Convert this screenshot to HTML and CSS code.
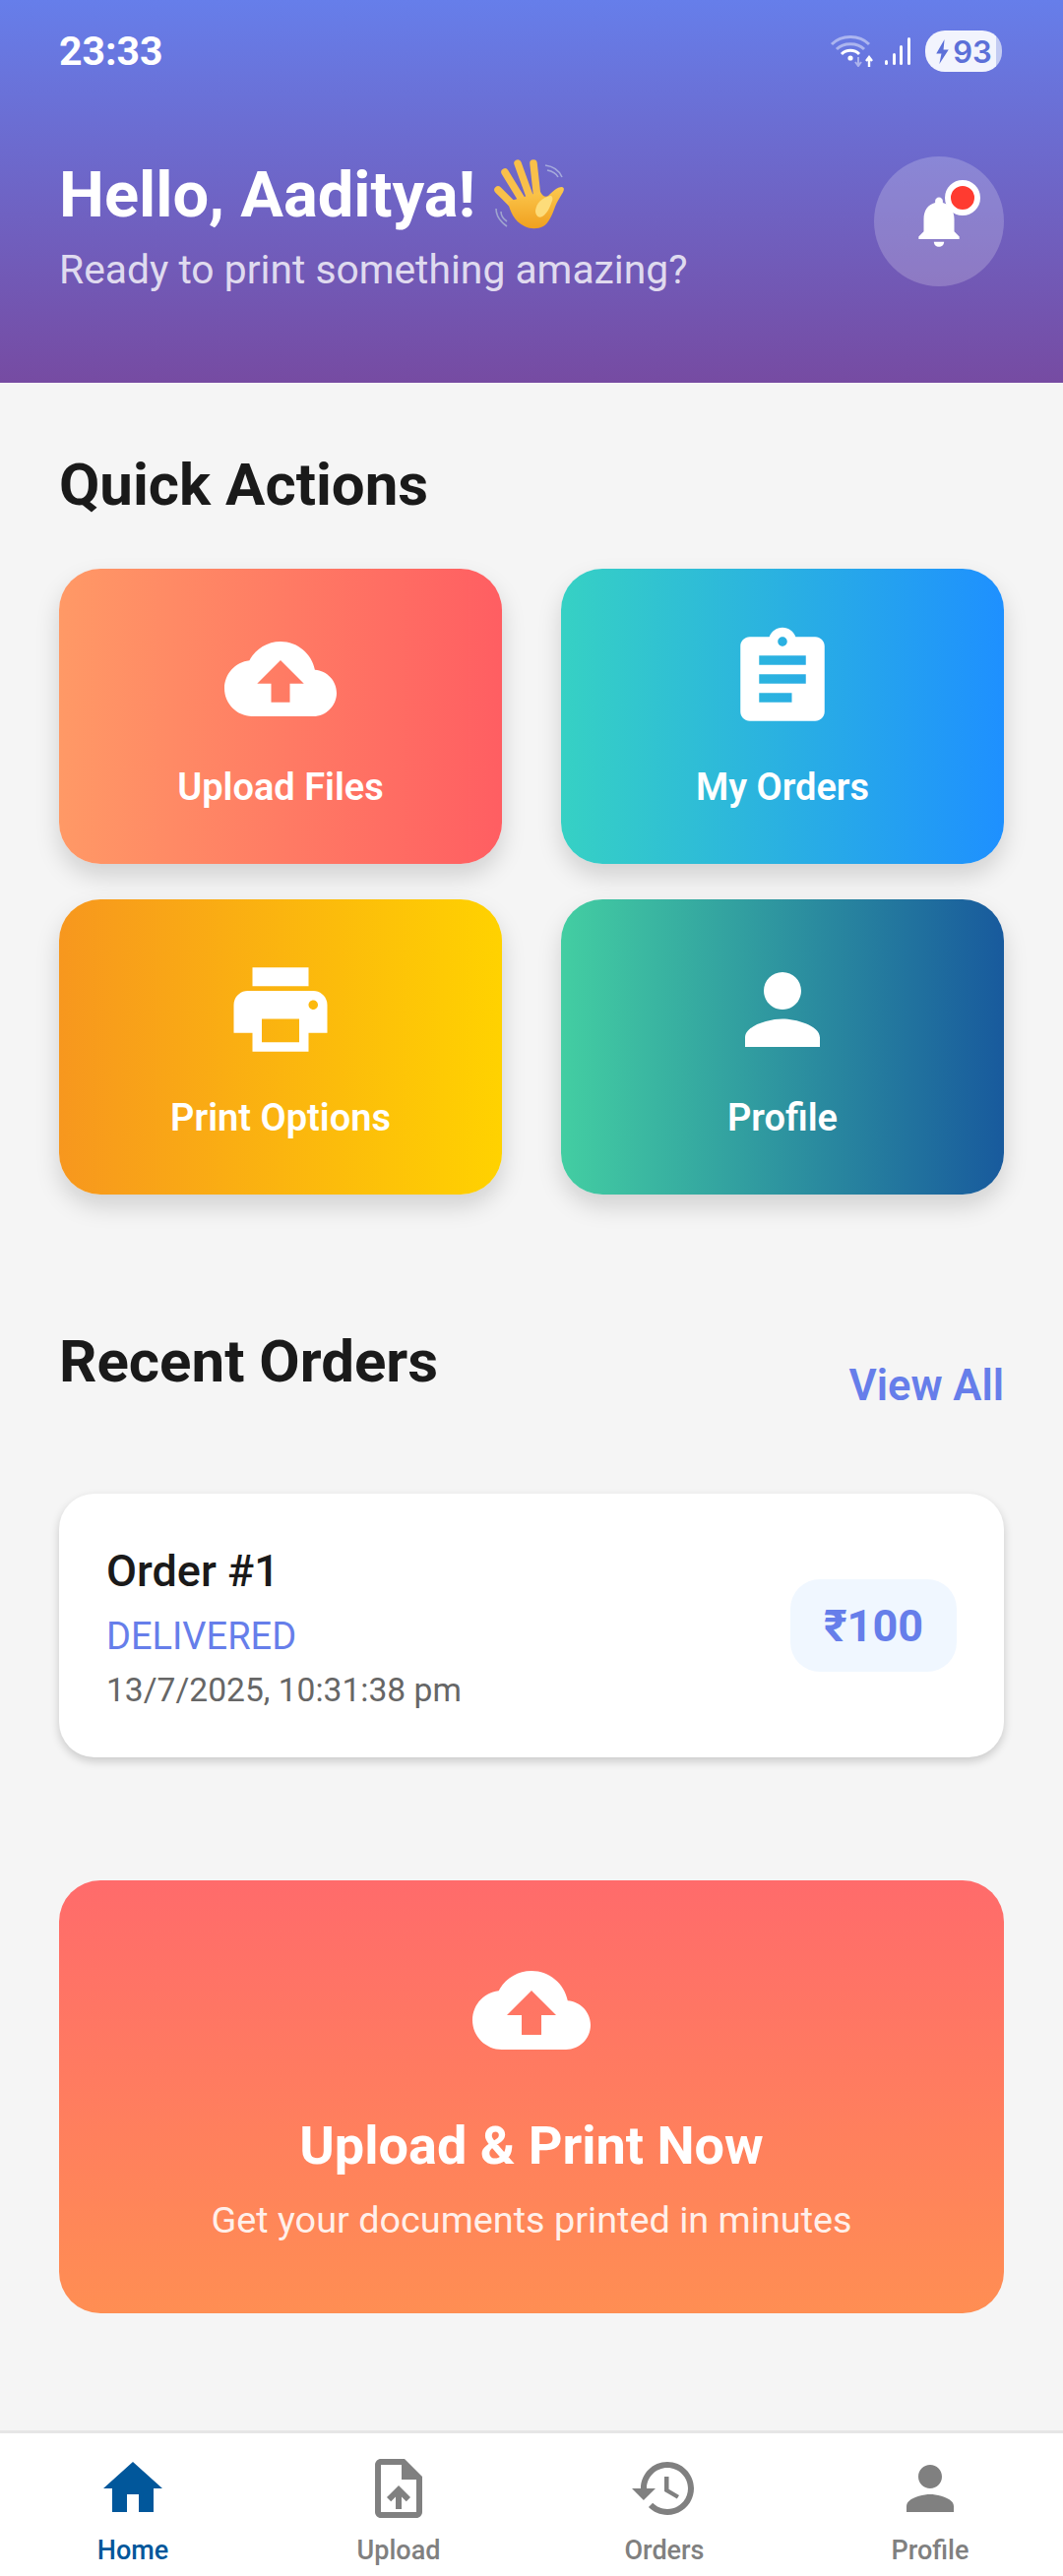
FILE: index.html
```html
<!DOCTYPE html>
<html lang="en">
<head>
<meta charset="utf-8">
<title>Home</title>
<link rel="stylesheet" href="styles.css">
</head>
<body>
<div class="app">
  <header class="hero">
    <div class="status">
      <span class="time">23:33</span>
      <div class="status-icons">
        <svg class="wifi" viewBox="0 0 45 34" width="45" height="34">
          <path d="M2 11C12 1 30 1 40 11" fill="none" stroke="#fff" stroke-opacity=".45" stroke-width="3"/>
          <path d="M7 16C14 9 28 9 35 16" fill="none" stroke="#fff" stroke-opacity=".45" stroke-width="3"/>
          <path d="M12 21C17 16 25 16 30 21" fill="none" stroke="#fff" stroke-width="3"/>
          <circle cx="21" cy="25" r="2.6" fill="#fff"/>
          <path d="M29 24v8M26 29l3 4 3-4" fill="none" stroke="#fff" stroke-opacity=".45" stroke-width="2"/>
          <path d="M40 34v-9M37 28l3-4 3 4" fill="none" stroke="#fff" stroke-width="2.4"/>
        </svg>
        <svg class="signal" viewBox="0 0 28 30" width="28" height="30">
          <rect x="1" y="24" width="3" height="5" rx="1.5" fill="#fff"/>
          <rect x="9" y="17" width="3" height="12" rx="1.5" fill="#fff"/>
          <rect x="16" y="9" width="3" height="20" rx="1.5" fill="#fff"/>
          <rect x="24" y="1" width="3" height="28" rx="1.5" fill="#fff"/>
        </svg>
        <div class="battery">
          <svg viewBox="0 0 14 24" width="15" height="25"><path d="M9 0 1 14h5l-2 10 9-14H8z" fill="#5c70d8"/></svg>
          <span>93</span>
        </div>
      </div>
    </div>
    <div class="greeting">
      <div class="greeting-text">
        <h1 class="hello">Hello, Aaditya!
          <svg class="wave" viewBox="0 0 76 72" width="76" height="72">
            <defs>
              <linearGradient id="skin" x1="0" y1="0" x2="0" y2="1">
                <stop offset="0" stop-color="#fcc94f"/>
                <stop offset="1" stop-color="#f0a01f"/>
              </linearGradient>
            </defs>
            <path d="M53 6c8 1 14 5 17 12M55 11c5 1 9 3 11 7" fill="none" stroke="#a6abdc" stroke-width="1.6"/>
            <path d="M3 50c0 7 4 13 11 18M8 53c0 4 3 8 6 10" fill="none" stroke="#a0a5cf" stroke-width="1.6"/>
            <g fill="none" stroke="#f9c04a" stroke-width="7.5" stroke-linecap="round">
              <path d="M5 31 24 50"/>
              <path d="M12 13 31 44"/>
              <path d="M25 4 38 40"/>
              <path d="M41 4 45 40"/>
            </g>
            <path d="M15 43 48 33c2 4 5 6 8 4 4-4 9-9 14-9 3 1 2 4 0 7-3 5-5 8-7 13-3 9-7 17-12 20-6 3-13 3-19 0C21 63 17 52 15 43Z" fill="url(#skin)"/>
            <path d="M43 52c1-8 7-13 15-15 2 0 3 2 2 5-2 6-5 13-10 16-4 2-7-1-7-6Z" fill="#fddc7a"/>
          </svg>
        </h1>
        <p class="subtitle">Ready to print something amazing?</p>
      </div>
      <div class="bell">
        <svg viewBox="0 0 24 24" width="62" height="62"><path fill="#fff" d="M12 22c1.1 0 2-.9 2-2h-4c0 1.1.89 2 2 2zm6-6v-5c0-3.07-1.64-5.64-4.5-6.32V4c0-.83-.67-1.5-1.5-1.5s-1.5.67-1.5 1.5v.68C7.63 5.36 6 7.92 6 11v5l-2 2v1h16v-1l-2-2z"/></svg>
        <span class="dot"></span>
      </div>
    </div>
  </header>

  <main class="main">
    <h2 class="section-title quick-title">Quick Actions</h2>
    <div class="actions">
      <div class="action a-upload">
        <svg class="action-icon" viewBox="0 0 24 24"><path d="M19.35 10.04C18.67 6.59 15.64 4 12 4 9.11 4 6.6 5.64 5.35 8.04 2.34 8.36 0 10.91 0 14c0 3.31 2.69 6 6 6h13c2.76 0 5-2.24 5-5 0-2.64-2.05-4.78-4.65-4.96zM14 13v4h-4v-4H7l5-5 5 5h-3z"/></svg>
        <span class="action-label">Upload Files</span>
      </div>
      <div class="action a-orders">
        <svg class="action-icon" viewBox="0 0 24 24"><path d="M19 3h-4.18C14.4 1.84 13.3 1 12 1c-1.3 0-2.4.84-2.82 2H5c-1.1 0-2 .9-2 2v14c0 1.1.9 2 2 2h14c1.1 0 2-.9 2-2V5c0-1.1-.9-2-2-2zm-7 0c.55 0 1 .45 1 1s-.45 1-1 1-1-.45-1-1 .45-1 1-1zm2 14H7v-2h7v2zm3-4H7v-2h10v2zm0-4H7V7h10v2z"/></svg>
        <span class="action-label">My Orders</span>
      </div>
      <div class="action a-print">
        <svg class="action-icon" viewBox="0 0 24 24"><path d="M19 8H5c-1.66 0-3 1.34-3 3v6h4v4h12v-4h4v-6c0-1.66-1.34-3-3-3zm-3 11H8v-5h8v5zm3-7c-.55 0-1-.45-1-1s.45-1 1-1 1 .45 1 1-.45 1-1 1zm-1-9H6v4h12V3z"/></svg>
        <span class="action-label">Print Options</span>
      </div>
      <div class="action a-profile">
        <svg class="action-icon" viewBox="0 0 24 24"><path d="M12 12c2.21 0 4-1.79 4-4s-1.79-4-4-4-4 1.79-4 4 1.79 4 4 4zm0 2c-2.67 0-8 1.34-8 4v2h16v-2c0-2.66-5.33-4-8-4z"/></svg>
        <span class="action-label">Profile</span>
      </div>
    </div>

    <div class="recent-head">
      <h2 class="section-title recent-title">Recent Orders</h2>
      <a class="view-all">View All</a>
    </div>

    <div class="order">
      <div class="order-info">
        <div class="order-name">Order #1</div>
        <div class="order-status">DELIVERED</div>
        <div class="order-date">13/7/2025, 10:31:38 pm</div>
      </div>
      <div class="price">₹100</div>
    </div>

    <div class="banner">
      <svg class="banner-icon" viewBox="0 0 24 24"><path d="M19.35 10.04C18.67 6.59 15.64 4 12 4 9.11 4 6.6 5.64 5.35 8.04 2.34 8.36 0 10.91 0 14c0 3.31 2.69 6 6 6h13c2.76 0 5-2.24 5-5 0-2.64-2.05-4.78-4.65-4.96zM14 13v4h-4v-4H7l5-5 5 5h-3z"/></svg>
      <div class="banner-title">Upload &amp; Print Now</div>
      <div class="banner-sub">Get your documents printed in minutes</div>
    </div>
  </main>

  <nav class="nav">
    <div class="tab active">
      <svg class="tab-icon" viewBox="0 0 24 24"><path d="M10 20v-6h4v6h5v-8h3L12 3 2 12h3v8z"/></svg>
      <span>Home</span>
    </div>
    <div class="tab">
      <svg class="tab-icon" viewBox="0 0 24 24"><path d="M14 2H6c-1.1 0-1.99.9-1.99 2L4 20c0 1.1.89 2 1.99 2H18c1.1 0 2-.9 2-2V8l-6-6zm4 18H6V4h7v5h5v11zM8 15.01l1.41 1.41L11 14.84V19h2v-4.16l1.59 1.59L16 15.01 12.01 11 8 15.01z"/></svg>
      <span>Upload</span>
    </div>
    <div class="tab">
      <svg class="tab-icon" viewBox="0 0 24 24"><path d="M13 3c-4.97 0-9 4.03-9 9H1l3.89 3.89.07.14L9 12H6c0-3.87 3.13-7 7-7s7 3.13 7 7-3.13 7-7 7c-1.93 0-3.68-.79-4.94-2.06l-1.42 1.42C8.27 19.99 10.51 21 13 21c4.97 0 9-4.03 9-9s-4.03-9-9-9zm-1 5v5l4.28 2.54.72-1.21-3.5-2.08V8H12z"/></svg>
      <span>Orders</span>
    </div>
    <div class="tab">
      <svg class="tab-icon" viewBox="0 0 24 24"><path d="M12 12c2.21 0 4-1.79 4-4s-1.79-4-4-4-4 1.79-4 4 1.79 4 4 4zm0 2c-2.67 0-8 1.34-8 4v2h16v-2c0-2.66-5.33-4-8-4z"/></svg>
      <span>Profile</span>
    </div>
  </nav>
</div>
</body>
</html>
```

FILE: styles.css
```css
* { box-sizing: border-box; }
html, body { margin: 0; padding: 0; }
body { font-family: Roboto, "Liberation Sans", sans-serif; background: #f5f5f5; }
.app { height: 2618px; display: flex; flex-direction: column; overflow: hidden; }

.hero { height: 389px; padding: 31px 60px 0; background: linear-gradient(180deg, #667eea, #764ba2); color: #fff; flex: none; }
.status { height: 42px; display: flex; align-items: center; justify-content: space-between; }
.time { font-family: Roboto, sans-serif; font-weight: 700; font-size: 41px; line-height: 42px; }
.status-icons { display: flex; align-items: center; margin-right: 2px; }
.wifi { margin-right: 10px; margin-top: -2px; }
.signal { margin-right: 14px; }
.battery { width: 78px; height: 42px; border-radius: 20px; background: linear-gradient(90deg, #f2f4fd 92%, #c3cbf2 92%); display: flex; align-items: center; justify-content: center; gap: 3px; color: #5c70d8; font-family: Inter, sans-serif; font-weight: 600; font-size: 31px; }

.greeting { margin-top: 86px; display: flex; align-items: flex-start; justify-content: space-between; }
.hello { margin: 0; font-size: 65px; line-height: 78px; font-weight: 700; white-space: nowrap; display: flex; align-items: center; gap: 18px; }
.wave { flex: none; }
.subtitle { margin: 13px 0 0; font-size: 40.8px; line-height: 48px; color: rgba(255, 255, 255, .8); }
.bell { position: relative; width: 132px; height: 132px; border-radius: 50%; background: rgba(255, 255, 255, .2); display: flex; align-items: center; justify-content: center; }
.dot { position: absolute; top: 24px; left: 72px; width: 36px; height: 36px; border-radius: 50%; background: #ff3b30; border: 6px solid #fff; }

.main { flex: 1; padding: 68px 60px 0; }
.section-title { margin: 0; font-size: 60px; line-height: 72px; font-weight: 700; color: #1a1a1a; }
.quick-title { margin-bottom: 49px; }
.actions { display: grid; grid-template-columns: 1fr 1fr; column-gap: 60px; row-gap: 36px; }
.action { height: 300px; border-radius: 42px; display: flex; flex-direction: column; align-items: center; justify-content: center; gap: 30px; color: #fff; box-shadow: 0 12px 24px rgba(0, 0, 0, .15); }
.action-icon { width: 114px; height: 114px; fill: #fff; }
.action-label { font-size: 38px; line-height: 46px; font-weight: 600; }
.a-upload { background: linear-gradient(90deg, #ff9966, #ff5e62); }
.a-orders { background: linear-gradient(90deg, #36d1c4, #1e90ff); }
.a-print { background: linear-gradient(90deg, #f7971e, #ffd200); }
.a-profile { background: linear-gradient(90deg, #43cea2, #185a9d); }

.recent-head { margin-top: 134px; display: flex; justify-content: space-between; align-items: center; }
.recent-title { margin-bottom: 50px; }
.view-all { font-size: 43.5px; line-height: 50px; font-weight: 600; color: #667eea; }

.order { margin-top: 48px; height: 268px; padding: 0 48px; border-radius: 36px; background: #fff; display: flex; align-items: center; justify-content: space-between; box-shadow: 0 4px 10px rgba(0, 0, 0, .18); }
.order-info { margin-top: 6px; }
.order-name { font-size: 45px; line-height: 50px; font-weight: 500; color: #1a1a1a; }
.order-status { margin-top: 18px; font-size: 38px; line-height: 46px; color: #667eea; }
.order-date { margin-top: 12px; font-size: 33.6px; line-height: 40px; color: #666; }
.price { width: 169px; height: 94px; border-radius: 30px; background: #f0f7ff; color: #667eea; font-size: 45px; font-weight: 700; display: flex; align-items: center; justify-content: center; }

.banner { margin-top: 125px; height: 440px; border-radius: 42px; background: linear-gradient(180deg, #ff6b6b, #ff8e53); color: #fff; display: flex; flex-direction: column; align-items: center; padding-top: 72px; }
.banner-icon { width: 120px; height: 120px; fill: #fff; }
.banner-title { margin-top: 46px; font-size: 54px; line-height: 64px; font-weight: 700; }
.banner-sub { margin-top: 20px; font-size: 37.8px; line-height: 46px; color: rgba(255, 255, 255, .9); }

.nav { flex: none; height: 148px; background: #fff; border-top: 3px solid #e6e6e6; display: grid; grid-template-columns: repeat(4, 1fr); }
.tab { display: flex; flex-direction: column; align-items: center; padding-top: 20px; color: #808080; font-size: 27px; line-height: 32px; font-weight: 500; }
.tab-icon { width: 72px; height: 72px; fill: currentColor; margin-bottom: 11px; }
.tab.active { color: #01579b; }
```
